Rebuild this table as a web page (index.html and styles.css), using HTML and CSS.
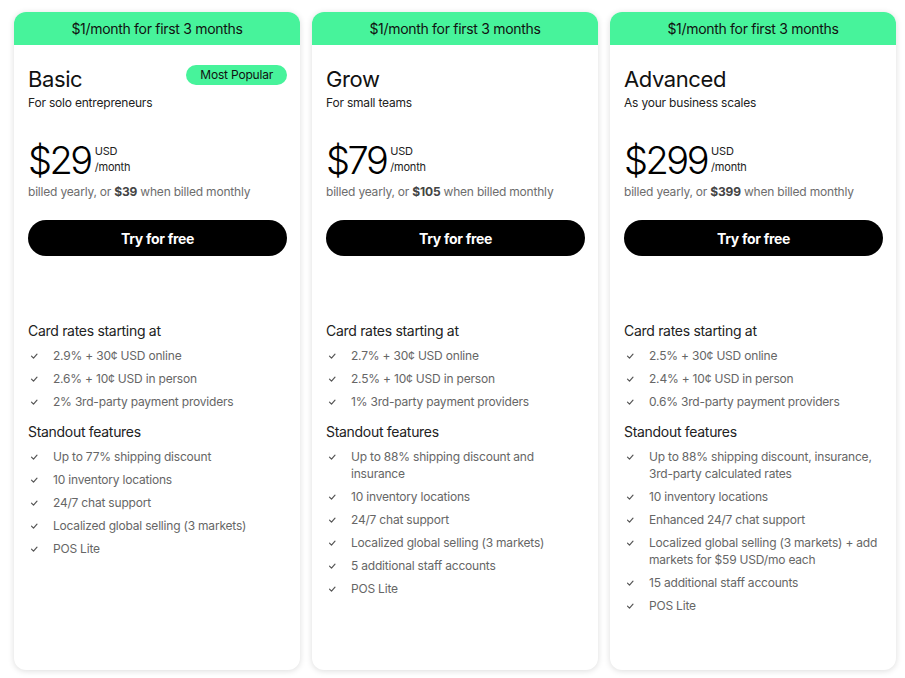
FILE: index.html
```html
<!DOCTYPE html>
<html>
<head>
<meta charset="utf-8">
<link rel="stylesheet" href="styles.css">
</head>
<body>
<div class="plans">
  <div class="card">
    <div class="promo">$1/month for first 3 months</div>
    <div class="body">
      <div class="title-row"><h2 class="title">Basic</h2><span class="badge">Most Popular</span></div>
      <p class="sub">For solo entrepreneurs</p>
      <div class="price"><span class="amount">$29</span><span class="unit"><span>USD</span><span>/month</span></span></div>
      <p class="billed">billed yearly, or <b>$39</b> when billed monthly</p>
      <button class="cta">Try for free</button>
      <h3 class="sec first">Card rates starting at</h3>
      <ul class="list">
        <li><svg class="chk" viewBox="0 0 12 12"><path d="M3.5 6.2l2 2 3.5-4"/></svg><span>2.9% + 30¢ USD online</span></li>
        <li><svg class="chk" viewBox="0 0 12 12"><path d="M3.5 6.2l2 2 3.5-4"/></svg><span>2.6% + 10¢ USD in person</span></li>
        <li><svg class="chk" viewBox="0 0 12 12"><path d="M3.5 6.2l2 2 3.5-4"/></svg><span>2% 3rd-party payment providers</span></li>
      </ul>
      <h3 class="sec">Standout features</h3>
      <ul class="list">
        <li><svg class="chk" viewBox="0 0 12 12"><path d="M3.5 6.2l2 2 3.5-4"/></svg><span>Up to 77% shipping discount</span></li>
        <li><svg class="chk" viewBox="0 0 12 12"><path d="M3.5 6.2l2 2 3.5-4"/></svg><span>10 inventory locations</span></li>
        <li><svg class="chk" viewBox="0 0 12 12"><path d="M3.5 6.2l2 2 3.5-4"/></svg><span>24/7 chat support</span></li>
        <li><svg class="chk" viewBox="0 0 12 12"><path d="M3.5 6.2l2 2 3.5-4"/></svg><span>Localized global selling (3 markets)</span></li>
        <li><svg class="chk" viewBox="0 0 12 12"><path d="M3.5 6.2l2 2 3.5-4"/></svg><span>POS Lite</span></li>
      </ul>
    </div>
  </div>
  <div class="card">
    <div class="promo">$1/month for first 3 months</div>
    <div class="body">
      <div class="title-row"><h2 class="title">Grow</h2></div>
      <p class="sub">For small teams</p>
      <div class="price"><span class="amount">$79</span><span class="unit"><span>USD</span><span>/month</span></span></div>
      <p class="billed">billed yearly, or <b>$105</b> when billed monthly</p>
      <button class="cta">Try for free</button>
      <h3 class="sec first">Card rates starting at</h3>
      <ul class="list">
        <li><svg class="chk" viewBox="0 0 12 12"><path d="M3.5 6.2l2 2 3.5-4"/></svg><span>2.7% + 30¢ USD online</span></li>
        <li><svg class="chk" viewBox="0 0 12 12"><path d="M3.5 6.2l2 2 3.5-4"/></svg><span>2.5% + 10¢ USD in person</span></li>
        <li><svg class="chk" viewBox="0 0 12 12"><path d="M3.5 6.2l2 2 3.5-4"/></svg><span>1% 3rd-party payment providers</span></li>
      </ul>
      <h3 class="sec">Standout features</h3>
      <ul class="list">
        <li><svg class="chk" viewBox="0 0 12 12"><path d="M3.5 6.2l2 2 3.5-4"/></svg><span>Up to 88% shipping discount and insurance</span></li>
        <li><svg class="chk" viewBox="0 0 12 12"><path d="M3.5 6.2l2 2 3.5-4"/></svg><span>10 inventory locations</span></li>
        <li><svg class="chk" viewBox="0 0 12 12"><path d="M3.5 6.2l2 2 3.5-4"/></svg><span>24/7 chat support</span></li>
        <li><svg class="chk" viewBox="0 0 12 12"><path d="M3.5 6.2l2 2 3.5-4"/></svg><span>Localized global selling (3 markets)</span></li>
        <li><svg class="chk" viewBox="0 0 12 12"><path d="M3.5 6.2l2 2 3.5-4"/></svg><span>5 additional staff accounts</span></li>
        <li><svg class="chk" viewBox="0 0 12 12"><path d="M3.5 6.2l2 2 3.5-4"/></svg><span>POS Lite</span></li>
      </ul>
    </div>
  </div>
  <div class="card">
    <div class="promo">$1/month for first 3 months</div>
    <div class="body">
      <div class="title-row"><h2 class="title">Advanced</h2></div>
      <p class="sub">As your business scales</p>
      <div class="price"><span class="amount">$299</span><span class="unit"><span>USD</span><span>/month</span></span></div>
      <p class="billed">billed yearly, or <b>$399</b> when billed monthly</p>
      <button class="cta">Try for free</button>
      <h3 class="sec first">Card rates starting at</h3>
      <ul class="list">
        <li><svg class="chk" viewBox="0 0 12 12"><path d="M3.5 6.2l2 2 3.5-4"/></svg><span>2.5% + 30¢ USD online</span></li>
        <li><svg class="chk" viewBox="0 0 12 12"><path d="M3.5 6.2l2 2 3.5-4"/></svg><span>2.4% + 10¢ USD in person</span></li>
        <li><svg class="chk" viewBox="0 0 12 12"><path d="M3.5 6.2l2 2 3.5-4"/></svg><span>0.6% 3rd-party payment providers</span></li>
      </ul>
      <h3 class="sec">Standout features</h3>
      <ul class="list">
        <li><svg class="chk" viewBox="0 0 12 12"><path d="M3.5 6.2l2 2 3.5-4"/></svg><span>Up to 88% shipping discount, insurance, 3rd-party calculated rates</span></li>
        <li><svg class="chk" viewBox="0 0 12 12"><path d="M3.5 6.2l2 2 3.5-4"/></svg><span>10 inventory locations</span></li>
        <li><svg class="chk" viewBox="0 0 12 12"><path d="M3.5 6.2l2 2 3.5-4"/></svg><span>Enhanced 24/7 chat support</span></li>
        <li><svg class="chk" viewBox="0 0 12 12"><path d="M3.5 6.2l2 2 3.5-4"/></svg><span>Localized global selling (3 markets) + add markets for $59 USD/mo each</span></li>
        <li><svg class="chk" viewBox="0 0 12 12"><path d="M3.5 6.2l2 2 3.5-4"/></svg><span>15 additional staff accounts</span></li>
        <li><svg class="chk" viewBox="0 0 12 12"><path d="M3.5 6.2l2 2 3.5-4"/></svg><span>POS Lite</span></li>
      </ul>
    </div>
  </div>
</div>
</body>
</html>
```
FILE: styles.css
```css
* { box-sizing: border-box; }
html, body { margin: 0; padding: 0; background: #fff; }
body { font-family: Inter, "Noto Sans", "Liberation Sans", sans-serif; color: #000; }
.plans {
  display: flex;
  gap: 12px;
  padding: 12px 0 0 14px;
  height: 678px;
  overflow: hidden;
}
.card {
  width: 286px;
  height: 658px;
  flex: none;
  background: #fff;
  border-radius: 12px;
  box-shadow: 0 1px 6px rgba(0,0,0,0.14);
  overflow: hidden;
  display: flex;
  flex-direction: column;
}
.promo {
  height: 33px;
  background: #47f39b;
  display: flex;
  align-items: center;
  justify-content: center;
  font-size: 14px;
  letter-spacing: -0.3px;
  color: #111;
}
.body { padding: 20px 13px 0 14px; }
.title-row { display: flex; justify-content: space-between; align-items: flex-start; }
.title { margin: 0; font-size: 22px; font-weight: 400; line-height: 28px; letter-spacing: -0.4px; color: #111; }
.badge {
  background: #47f39b;
  border-radius: 10px;
  height: 20px;
  padding: 0 14px;
  font-size: 12px;
  line-height: 20px;
  letter-spacing: -0.2px;
  color: #111;
}
.sub { margin: 2px 0 0; font-size: 12px; line-height: 16px; letter-spacing: -0.2px; color: #222; }
.price { display: flex; align-items: flex-start; margin-top: 27px; height: 44px; }
.amount { font-size: 38px; line-height: 44px; font-weight: 300; letter-spacing: -2.5px; color: #000; }
.unit { display: flex; flex-direction: column; font-size: 11px; line-height: 16px; padding-top: 5px; margin-left: 4px; letter-spacing: -0.2px; color: #222; }
.billed { margin: 2px 0 0; font-size: 12px; line-height: 16px; letter-spacing: -0.2px; color: #6d6d6d; }
.billed b { color: #444; font-weight: 700; }
.cta {
  display: block;
  width: 100%;
  height: 36px;
  margin-top: 20px;
  border: 0;
  border-radius: 18px;
  background: #000;
  color: #fff;
  font-family: inherit;
  font-size: 14px;
  font-weight: 700;
  letter-spacing: -0.3px;
}
.sec { margin: 12px 0 0; font-size: 14px; font-weight: 400; line-height: 20px; letter-spacing: -0.3px; color: #222; }
.sec.first { margin-top: 65px; }
.list { list-style: none; margin: 6px 0 0; padding: 0; display: flex; flex-direction: column; gap: 6px; }
.list li { display: flex; align-items: flex-start; font-size: 12px; line-height: 17px; letter-spacing: -0.2px; color: #666; }
.chk { width: 12px; height: 12px; flex: none; margin: 2.5px 13px 0 0; fill: none; stroke: #555; stroke-width: 1.2; stroke-linecap: round; stroke-linejoin: round; }
```
